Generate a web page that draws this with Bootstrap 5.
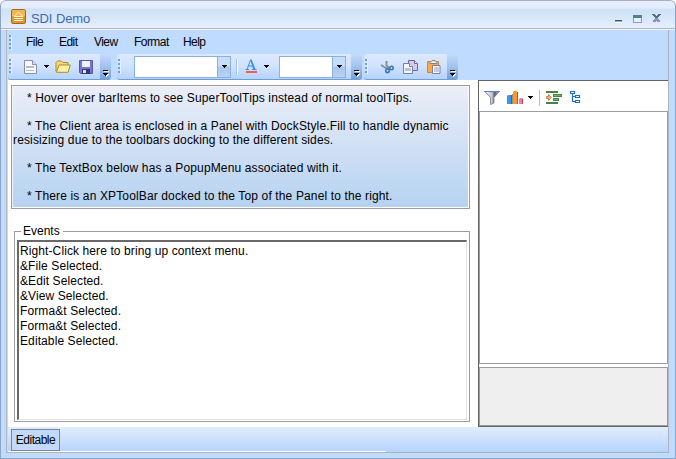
<!DOCTYPE html>
<html lang="en">
<head>
<meta charset="utf-8">
<title>SDI Demo</title>
<link href="https://cdn.jsdelivr.net/npm/bootstrap@5.3.0/dist/css/bootstrap.min.css" rel="stylesheet">
<style>
html,body{height:459px;overflow:hidden}
body{font:12px/14px "Liberation Sans",Arial,sans-serif;color:#000;background:#fff}
svg{display:block;flex:none}
.window{width:676px;height:459px;background:#bfdbff;border:1px solid #8ba5c9;border-top-color:#a9afc0;border-radius:6px 6px 0 0;overflow:hidden}
.titlebar{height:29px;padding-left:10px;padding-right:14px;background:linear-gradient(#e6eeff 0,#e3edfd 7px,#cfe2f7 8px,#d4e5f9 14px,#e5eefe 27px,#adb3c2 27px,#adb3c2 28px,#f3f7ff 28px)}
.caption{font-size:13px;line-height:16px;color:#3f69ad;padding:10px 0 0 5px;letter-spacing:-.1px}
.client{margin:0 6px 0 5px;height:423px;border:1px solid #b0b3ba;border-top:0;background:#bfdbff;padding-left:1px}
.menubar{height:24px;padding-left:1px}
.menubar a{color:#000;text-decoration:none;white-space:nowrap;letter-spacing:-.55px}
.m-file{width:33px;margin-left:14px}
.m-edit{width:35px}
.m-view{width:40px}
.m-format{width:49px}
.grip{width:3px;height:15px;flex:none;background:repeating-linear-gradient(#6f9de0 0 2px,transparent 2px 4px);border-right:1px solid #e6f0ff}
.toolstrip{height:26px;flex:none;border-radius:3px;background:linear-gradient(#dce9fd,#cfe2ff 50%,#b5d3fb);border-bottom:1px solid #6f9dd9;overflow:hidden}
.overflow-cap{width:11px;height:26px;flex:none;margin-left:auto;background:linear-gradient(#c4dbfb,#a0c2ef 50%,#6f9dd9);padding:15px 0 0 2px}
.combo{height:22px;border:1px solid #8cb0de;background:#fff;flex:none}
.combo-drop{width:13px;height:20px;margin-left:auto;border-left:1px solid #8cb0de;background:linear-gradient(#c8ddf7 45%,#a9c7ed 50%,#b7d2f3)}
.vline{width:2px;height:16px;flex:none;background:#9ebfeb;border-right:1px solid #fff}
.workspace{height:347px;background:#fff}
.left-pane{width:463px;padding:5px 0 0 3px}
.info{height:124px;border:1px solid #9c9c9c;box-shadow:inset -1px -1px #fff,inset 1px 1px #f4f4f4;background:linear-gradient(#ebeef7,#b5d2f1);padding:5px 0 0 1px;white-space:pre;letter-spacing:.135px}
.events{height:198px;margin:15px 0 0 3px}
.events-frame{height:191px;border:1px solid #9c9c9c;margin-top:-7px;padding:8px 2px 1px}
.events-title{position:relative;z-index:1;width:42px;height:14px;margin-left:7px;padding-left:2px;background:#fff}
.log{height:180px;border:1px solid #e0e0e0;border-top:2px solid #696969;border-left:2px solid #696969;padding:2px 0 0 1px;line-height:15px;letter-spacing:.1px}
.right-pane{width:191px;margin-left:8px;border:1px solid #636363;border-right:0}
.pane-tools{height:30px;padding:3px 0 0 5px}
.canvas-box{height:253px;border:1px solid #9c9c9c}
.detail-box{height:59px;margin-top:3px;border:1px solid #9c9c9c;background:#efefef}
.statusbar{height:25px;background:linear-gradient(#e2edfd,#b5d4ff);padding:2px 0 0 3px}
.status-edit{width:49px;height:22px;border:1px solid #7b8694;background:#c1dafa;letter-spacing:-.5px}
.status-rule{width:378px;height:1px;background:#fff;margin-left:-3px}
</style>
<script src="https://cdn.jsdelivr.net/npm/bootstrap@5.3.0/dist/js/bootstrap.bundle.min.js"></script>
</head>
<body>
<svg width="0" height="0" class="d-none">
<symbol id="down" viewBox="0 0 5 3"><path d="M0 0h5v1h-1v1h-1v1h-1v-1h-1v-1h-1z"/></symbol>
<symbol id="more" viewBox="0 0 7 8"><path d="M2 2h5v1H2zM2 5h5v1H6v1H5v1H4V7H3V6H2z" fill="#fff"/><path d="M1 1h5v1H1zM1 4h5v1H5v1H4v1H3V6H2V5H1z"/></symbol>
</svg>
<main class="window">
<header class="titlebar d-flex align-items-start">
  <svg width="15" height="15" viewBox="0 0 15 15" class="mt-2"><rect x=".5" y=".5" width="14" height="14" rx="1.500" fill="#e19423" stroke="#a8671c"/><path d="M1 1h13v6H1z" fill="#f4b650"/><path d="M7.500 3L12 7.500H3zM3 9.500h9M3 11.500h9" stroke="#fff6dc" fill="none"/></svg>
  <div class="caption">SDI Demo</div>
  <div class="d-flex ms-auto" style="padding-top:13px">
    <svg width="46" height="10" viewBox="0 0 46 10" shape-rendering="crispEdges"><path d="M0 8h7v1H0zM19 9h9M38 9h3" fill="#fff"/><path d="M0 6h7v1H0z" fill="#555"/><path d="M0 7h7v1H0z" fill="#9a9fd4"/><path d="M18 1h9v3h-9z" fill="#4c8583"/><path d="M18.500 4v4.500h8V4" fill="#e8efff" stroke="#8f97cd"/><path d="M37 0h3v1h1v1h1v-1h1v-1h3v1h-1v1h-1v1h-1v1H40V3H39V2H38V1H37z" fill="#4e7478"/><path d="M40 4h3v1h1v1h1v2h-3v-1h-1v1h-3V6h1V5h1z" fill="#8c91c9"/></svg>
  </div>
</header>
<div class="client">
  <nav class="menubar d-flex align-items-center"><span class="grip"></span><a href="#" class="m-file">File</a><a href="#" class="m-edit">Edit</a><a href="#" class="m-view">View</a><a href="#" class="m-format">Format</a><a href="#">Help</a></nav>
  <div class="d-flex" style="height:26px">
    <div class="toolstrip d-flex align-items-center" style="width:103px;padding-left:1px">
      <span class="grip"></span>
      <svg width="13" height="14" viewBox="0 0 13 14" style="margin-left:12px"><path d="M.5.500h8l4 4v9H.5z" fill="#f7f8fc" stroke="#8590a8"/><path d="M8.500.500v4h4" fill="#dce0ea" stroke="#8590a8"/><path d="M2 6h8v2H2zM2 10h8v1H2z" fill="#b4bccd"/></svg>
      <svg width="5" height="3" style="margin-left:7px"><use href="#down"/></svg>
      <svg width="16" height="13" viewBox="0 0 16 13" style="margin-left:6px"><path d="M1 11.500V2.500L2.500 1h4L8 2.500h5V5" fill="#f7d873" stroke="#b18b2a"/><path d="M1.500 12.300L4 5h11.300L13 12.300z" fill="#fff0a8" stroke="#b18b2a"/></svg>
      <svg width="14" height="14" viewBox="0 0 14 14" style="margin-left:8px"><path d="M.5.500h13v13h-12l-1-1z" fill="#7678d0" stroke="#5556b0"/><path d="M3 1h8v6H3z" fill="#eef1ff"/><path d="M3 9h8v5H3z" fill="#34366b"/><path d="M4 10h3v3H4z" fill="#dfe3f5"/></svg>
      <span class="overflow-cap"><svg width="7" height="8"><use href="#more"/></svg></span>
    </div>
    <div class="toolstrip d-flex align-items-center" style="width:245px;margin-left:6px;padding-left:1px">
      <span class="grip"></span>
      <div class="combo d-flex" style="width:97px;margin-left:13px"><span class="combo-drop d-flex align-items-center justify-content-center"><svg width="5" height="3"><use href="#down"/></svg></span></div>
      <span class="vline" style="margin-left:5px"></span>
      <svg width="13" height="15" viewBox="0 0 13 15" style="margin-left:7px"><path d="M.5 10.500H4M7 10.500h4.500M2 10.500L5.500 1M3.500 7h5" fill="none" stroke="#3b8fec"/><path d="M5 .5h1.700L10.500 10.500H8.300z" fill="#3b8fec"/><path d="M1 12h11v2H1z" fill="#f25c5c"/></svg>
      <svg width="5" height="3" style="margin-left:6px"><use href="#down"/></svg>
      <div class="combo d-flex" style="width:67px;margin-left:10px"><span class="combo-drop d-flex align-items-center justify-content-center"><svg width="5" height="3"><use href="#down"/></svg></span></div>
      <span class="overflow-cap"><svg width="7" height="8"><use href="#more"/></svg></span>
    </div>
    <div class="toolstrip d-flex align-items-center" style="width:94px;margin-left:2px;padding-left:1px">
      <span class="grip"></span>
      <svg width="14" height="14" viewBox="0 0 14 14" style="margin-left:12px"><path d="M6.500 1v4l3 4M1 5l5 3h3" fill="none" stroke="#8b8d94" stroke-width="2"/><circle cx="7.500" cy="10.800" r="1.800" fill="none" stroke="#3777bd" stroke-width="1.600"/><circle cx="11.500" cy="8" r="1.700" fill="none" stroke="#3777bd" stroke-width="1.600"/></svg>
      <svg width="15" height="14" viewBox="0 0 15 14" style="margin-left:9px"><path d="M5.500.500h6l3 3v7h-9z" fill="#d5c9e8" stroke="#766199"/><path d="M11.500.500v3h3" fill="#fff" stroke="#766199"/><path d="M.5 3.500h6l3 3v7h-9z" fill="#f4f6fd" stroke="#6b82aa"/><path d="M6.500 3.500v3h3" fill="#fff" stroke="#6b82aa"/><path d="M2 8h6v3H2z" fill="#b7c2df"/></svg>
      <svg width="14" height="14" viewBox="0 0 14 14" style="margin-left:9px"><path d="M.5 1.500h11v11H.5z" fill="#ffa842" stroke="#d58635"/><path d="M3 3.500v-1L5 .500h3l2 2v1z" fill="#e9e9ee" stroke="#85868c"/><path d="M5.500 5.500h7.500v8H5.500z" fill="#fff" stroke="#7b7f9d"/><path d="M7 7h5v5H7z" fill="#c6cbe3"/></svg>
      <span class="overflow-cap"><svg width="7" height="8"><use href="#more"/></svg></span>
    </div>
  </div>
  <div class="workspace d-flex">
    <section class="left-pane">
      <div class="info">    * Hover over barItems to see SuperToolTips instead of normal toolTips.

    * The Client area is enclosed in a Panel with DockStyle.Fill to handle dynamic
resisizing due to the toolbars docking to the different sides.

    * The TextBox below has a PopupMenu associated with it.

    * There is an XPToolBar docked to the Top of the Panel to the right.</div>
      <div class="events">
        <div class="events-title">Events</div>
        <div class="events-frame"><div class="log">Right-Click here to bring up context menu.<br>&amp;File Selected.<br>&amp;Edit Selected.<br>&amp;View Selected.<br>Forma&amp;t Selected.<br>Forma&amp;t Selected.<br>Editable Selected.</div></div>
      </div>
    </section>
    <aside class="right-pane">
      <div class="pane-tools d-flex align-items-center">
        <svg width="16" height="14" viewBox="0 0 16 14"><defs><linearGradient id="steel"><stop stop-color="#f5f5fa"/><stop offset=".5" stop-color="#c3c6d0"/><stop offset=".68" stop-color="#5c5f6c"/><stop offset="1" stop-color="#c8cad4"/></linearGradient></defs><path d="M.7.500h14.600L10 6.500V12l-3.500 1.500v-7z" fill="url(#steel)" stroke="#777b8c" stroke-width=".8"/><path d="M0 0h16v1H0z" fill="#5b7fd0"/></svg>
        <svg width="16" height="13" viewBox="0 0 16 13" style="margin-left:7px"><path d="M0 5l1-1h4v9H0z" fill="#3b94f4"/><path d="M4 4h1v9H4z" fill="#2768a9"/><path d="M5 3h1v10H5z" fill="#9f9350"/><path d="M6 1l1-1h3v13H6z" fill="#ff943a"/><path d="M10 1h1v12h-1z" fill="#b25721"/><path d="M12 8l1-1h2l1 1v5h-4z" fill="#f57aa7"/><path d="M15 8h1v5h-1z" fill="#bd3e6c"/></svg>
        <svg width="5" height="3" style="margin-left:5px"><use href="#down"/></svg>
        <span class="vline" style="margin-left:6px"></span>
        <svg width="16" height="14" viewBox="0 0 16 14" style="margin-left:5px"><path d="M0 0h12v2H0zM7 3h9v3H7zM7 7h6v3H7zM0 11h12v2H0z" fill="#458449"/><path d="M8 4h7v1H8zM8 8h4v1H8z" fill="#75b466"/><path d="M.5 5.500h2v-2l3 3-3 3v-2h-2z" fill="#f7b47a" stroke="#bd703d" stroke-width=".8"/></svg>
        <svg width="11" height="13" viewBox="0 0 11 13" style="margin-left:8px"><path d="M.5.500h4v2h-4zM2.500 3v7.500h3M2.500 5.500h3M5.500 4.500h4v2h-4zM5.500 9.500h4v2h-4z" fill="none" stroke="#1571cd" stroke-width="1.200"/></svg>
      </div>
      <div class="canvas-box"></div><div class="detail-box"></div>
    </aside>
  </div>
  <footer class="statusbar"><div class="status-edit d-flex align-items-center justify-content-center">Editable</div><div class="status-rule"></div></footer>
</div>
</main>
</body>
</html>
